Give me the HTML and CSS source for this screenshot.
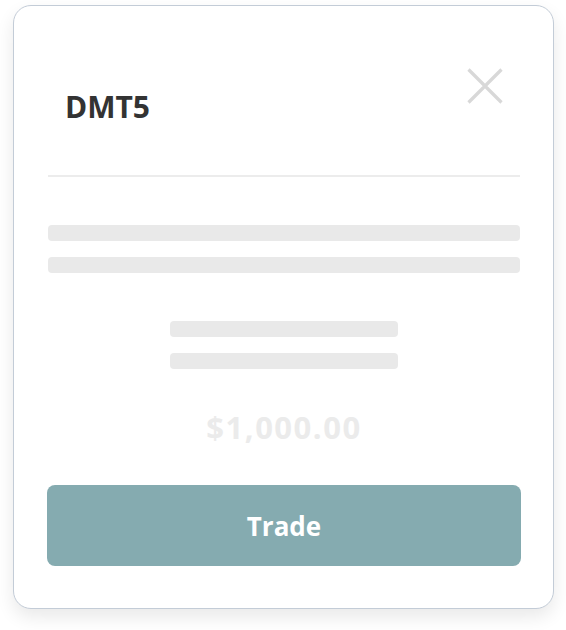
FILE: index.html
```html
<!DOCTYPE html>
<html>
<head>
<meta charset="utf-8">
<link rel="stylesheet" href="styles.css">
</head>
<body>
<div class="card">
  <div class="header">
    <h1 class="title">DMT5</h1>
    <button class="close" aria-label="Close">
      <svg width="36" height="36" viewBox="0 0 36 36"><path d="M1.5 1.5 L34.5 34.5 M34.5 1.5 L1.5 34.5" stroke="#d8d8d8" stroke-width="3.2" fill="none"/></svg>
    </button>
  </div>
  <div class="divider"></div>
  <div class="skeleton">
    <div class="bar"></div>
    <div class="bar"></div>
  </div>
  <div class="skeleton narrow">
    <div class="bar"></div>
    <div class="bar"></div>
  </div>
  <div class="amount">$1,000.00</div>
  <button class="trade">Trade</button>
</div>
</body>
</html>
```

FILE: styles.css
```css
html, body {
  margin: 0;
  padding: 0;
  background: #ffffff;
}
body {
  font-family: "Open Sans", "Liberation Sans", sans-serif;
  padding-bottom: 21px;
}
.card {
  box-sizing: border-box;
  width: 541px;
  margin: 5px 0 0 13px;
  padding: 0 33px 42px 34px;
  border: 1px solid #c3ccd7;
  border-radius: 18px;
  background: #fff;
  box-shadow: 0 8px 18px rgba(0, 0, 0, 0.09);
}
.header {
  display: flex;
  justify-content: space-between;
  align-items: flex-start;
  padding: 0 17px;
}
.title {
  margin: 81px 0 48px;
  font-size: 30px;
  line-height: 40px;
  font-weight: 700;
  color: #333333;
}
.close {
  margin-top: 62px;
  padding: 0;
  border: 0;
  background: none;
  width: 36px;
  height: 36px;
  display: block;
}
.close svg { display: block; }
.divider {
  height: 2px;
  background: #ececec;
}
.skeleton {
  display: flex;
  flex-direction: column;
  gap: 16px;
  margin-top: 48px;
}
.skeleton.narrow {
  width: 228px;
  margin-left: auto;
  margin-right: auto;
}
.bar {
  height: 16px;
  border-radius: 4px;
  background: #e9e9e9;
}
.amount {
  margin-top: 38px;
  text-align: center;
  font-size: 31px;
  letter-spacing: 1.5px;
  line-height: 40px;
  font-weight: 700;
  color: #ebebeb;
}
.trade {
  display: block;
  box-sizing: border-box;
  width: calc(100% + 2px);
  margin: 38px -1px 0;
  height: 81px;
  border: 0;
  border-radius: 8px;
  background: #85abb0;
  color: #fff;
  font-family: "Open Sans", "Liberation Sans", sans-serif;
  font-size: 26px;
  font-weight: 700;
}
```
